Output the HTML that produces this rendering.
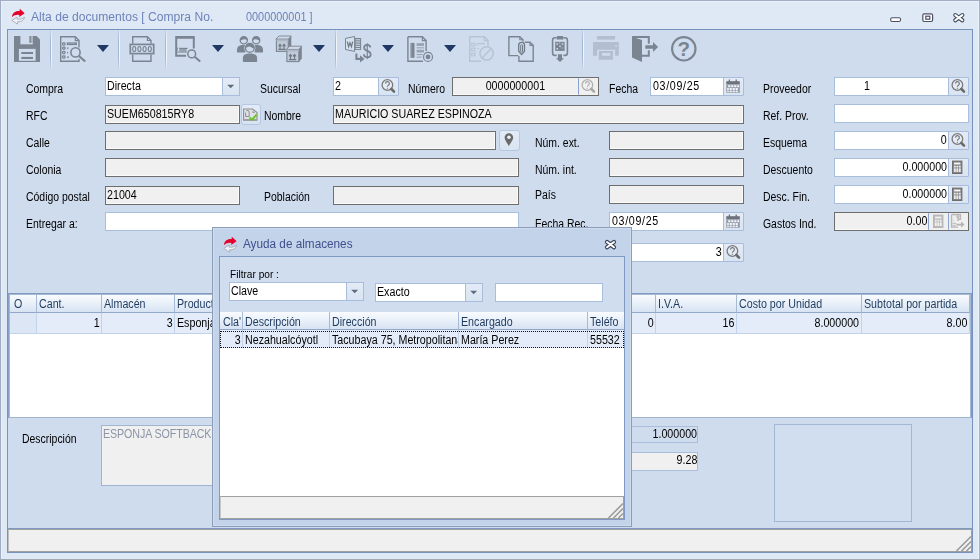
<!DOCTYPE html>
<html>
<head>
<meta charset="utf-8">
<title>Alta de documentos</title>
<style>
*{box-sizing:border-box;margin:0;padding:0}
html,body{width:980px;height:560px;overflow:hidden;background:#dfe9f5;font-family:"Liberation Sans",sans-serif;}
#win{position:absolute;left:0;top:0;width:980px;height:560px;background:#dfe9f5;border:1px solid #a0adc2;border-right:1px solid #a9b3c3;border-bottom:1px solid #a3a9b3;box-shadow:inset 1px 1px 0 #e9f0f9,inset -1px 0 0 #e9f0f9}
#content{position:absolute;left:7px;top:29px;width:966px;height:524px;background:#cfdcee;border:1px solid #7792bd;}
.ttl{position:absolute;font-size:12.5px;line-height:16px;white-space:nowrap;color:#6e82b9;}
.lbl{position:absolute;font-size:12px;line-height:14px;color:#000;white-space:nowrap;transform:scaleX(.87);transform-origin:left top;}
.in{position:absolute;height:19px;border:1px solid #a9bedb;background:#fff;font-size:12px;line-height:14px;padding:1px 2px 0 1px;white-space:nowrap;overflow:hidden;color:#000}
.in.d{border-color:#6e6e6e;background:#f0f0f0;box-shadow:inset -1px -1px 0 #fafafa}
.in.r{text-align:right;padding-right:1px}
.in.c{text-align:center}
.btn{position:absolute;height:20px;width:20px;border:1px solid #a9bddb;background:linear-gradient(#e3ebf7,#d9e4f2);border-radius:1px}
.sep{position:absolute;top:30px;width:2px;height:38px;background:linear-gradient(to right,#a3b7d5 0,#a3b7d5 1px,#f2f6fb 1px,#f2f6fb 2px);-webkit-mask-image:linear-gradient(to bottom,transparent 0,#000 25%,#000 75%,transparent 100%);mask-image:linear-gradient(to bottom,rgba(0,0,0,.3) 0,#000 30%,#000 70%,rgba(0,0,0,.3) 100%)}
.arr{position:absolute;width:0;height:0;border-left:6.6px solid transparent;border-right:6.6px solid transparent;border-top:7.4px solid #1f3864;top:44.7px}
.grid{position:absolute;background:#fff;border:1px solid #8599b9;overflow:hidden}
.gh{position:absolute;top:0;height:19px;border-right:1px solid #a6b9d5;border-bottom:1px solid #93a8c9;background:linear-gradient(#f9fbfe,#eaf1f9 45%,#d7e3f3);font-size:12px;line-height:14px;padding:3px 0 0 2px;color:#1e3a5f;white-space:nowrap;overflow:hidden}
.gc{position:absolute;height:21px;border-right:1px solid #c3d3ea;border-bottom:1px solid #c3d3ea;background:#e3ecf8;font-size:12px;line-height:14px;padding:3px 2px 0 2px;white-space:nowrap;overflow:hidden;color:#000}
.gc.r{text-align:right;padding-right:1.8px}
.mg .gh{height:18px;padding-top:2px}
.mg .gc{top:18px!important}
.in>span,.gh>span,.gc>span{display:inline-block;transform:scaleX(.89);transform-origin:left center;white-space:nowrap}
.r>span{transform-origin:right center}
.c>span{transform-origin:center center}
svg{position:absolute;overflow:visible}
.ico{position:absolute;width:26px;height:26px;top:36px}
</style>
</head>
<body>
<div id="win"></div>
<div id="content"></div>

<!-- TITLE BAR -->
<div class="ttl" style="left:31px;top:9px;transform:scaleX(.968);transform-origin:left top">Alta de documentos [ Compra No.</div>
<div class="ttl" style="left:246px;top:9px;transform:scaleX(.87);transform-origin:left top">0000000001 ]</div>
<svg style="left:11px;top:8px" width="15" height="18" viewBox="0 0 15 18"><path d="M0.9 9.2C1.2 4.8 5 2.6 8.6 3.2L8.8 0.8L13.6 5.2L8.2 9L8.4 6.9C5.6 6.5 3 7.2 0.9 9.2Z" fill="#e6002a"/><path d="M13.6 9.2C13 12.6 10 14.2 6.6 13.8L6.6 16.2L0.8 12.4L6 9.2L6.2 11.2C9 11.4 11.6 10.8 13.6 9.2Z" fill="#eef2f8" stroke="#a8adb5" stroke-width=".9"/></svg><svg style="left:890px;top:12px" width="76" height="11" viewBox="0 0 76 11"><rect x=".7" y="5.7" width="9.8" height="3.8" rx="1.4" fill="#fff" stroke="#4c5166" stroke-width="1.1"/><rect x="32.8" y="1.8" width="9.8" height="7.7" rx="1.4" fill="#fff" stroke="#4c5166" stroke-width="1.2"/><rect x="35.8" y="4.2" width="4" height="3" fill="#fff" stroke="#4c5166" stroke-width="1.2"/><path d="M65.3 3.1L72.3 8.3M72.3 3.1L65.3 8.3" stroke="#454a5e" stroke-width="4.2" stroke-linecap="round"/><path d="M65.3 3.1L72.3 8.3M72.3 3.1L65.3 8.3" stroke="#fff" stroke-width="2" stroke-linecap="round"/></svg><!--TITLEICONS-->

<!-- TOOLBAR -->
<!-- separators -->
<div class="sep" style="left:50px"></div>
<div class="sep" style="left:118px"></div>
<div class="sep" style="left:165px"></div>
<div class="sep" style="left:335px"></div>
<div class="sep" style="left:582px"></div>
<!-- dropdown arrows -->
<div class="arr" style="left:97px"></div>
<div class="arr" style="left:212px"></div>
<div class="arr" style="left:313px"></div>
<div class="arr" style="left:382px"></div>
<div class="arr" style="left:444px"></div>

<!-- 1 save -->
<svg class="ico" style="left:14px" viewBox="0 0 26 26"><path fill="#7b8591" d="M0 0H22.5L26 3.5V26H0Z"/><rect x="6.4" y="0" width="12.4" height="8.3" fill="#cfdcee"/><rect x="15.3" y="0" width="2.2" height="6.9" fill="#848d98"/><rect x="17.5" y="0" width="1.3" height="6.9" fill="#a9b2be"/><rect x="4.9" y="12.9" width="16.7" height="11.9" fill="#cfdcee"/><rect x="7.3" y="16" width="11.7" height="2" fill="#7b8591"/><rect x="7.3" y="20.9" width="11.7" height="2.1" fill="#7b8591"/></svg>

<!-- 2 doc search -->
<svg class="ico" style="left:60px" viewBox="0 0 26 26" fill="none" stroke="#7b8591"><path d="M19 11.5V4.6L15.3 0.7H0.7V25.3H19V23" stroke-width="1.4"/><path d="M15.3 0.7V4.6H19" stroke-width="1.2"/><g stroke-width="1.25"><rect x="2.6" y="6.9" width="2.4" height="2.2" rx=".8"/><rect x="2.6" y="11" width="2.4" height="2.2" rx=".8"/><rect x="2.6" y="15.4" width="2.4" height="2.2" rx=".8"/><rect x="2.6" y="19.9" width="2.4" height="2.2" rx=".8"/><rect x="7.4" y="7" width="9" height="1.5"/><path d="M7 12H8.6M7 16.5H8.2M7 21H9"/></g><circle cx="15.5" cy="16.4" r="4.6" stroke-width="1.6" fill="#cfdcee"/><path d="M18.9 20L25.3 25.5" stroke-width="2.2"/></svg>

<!-- 3 doc 0000 -->
<svg class="ico" style="left:129px" viewBox="0 0 26 26" fill="none" stroke="#7b8591"><path d="M3.7 7.5V0.7H18.4L22 4.5V7.5M3.7 18.5V25.3H22V18.5" stroke-width="1.4"/><path d="M18.4 0.7V4.5H22" stroke-width="1.2"/><rect x="1.3" y="8.4" width="23.4" height="9.2" stroke-width="1.7" fill="#cfdcee"/><g stroke-width="1.15"><ellipse cx="5.2" cy="13" rx="1.55" ry="2.5"/><ellipse cx="10.4" cy="13" rx="1.55" ry="2.5"/><ellipse cx="15.6" cy="13" rx="1.55" ry="2.5"/><ellipse cx="20.8" cy="13" rx="1.55" ry="2.5"/></g></svg>

<!-- 4 monitor search -->
<svg class="ico" style="left:175px" viewBox="0 0 26 26"><path fill="#7b8591" d="M0.2 0H19.8V12.5H17.8V2.7H2.2V18.8H11V20.8H0.2Z"/><rect x="2.2" y="11.8" width="10.3" height="1.2" fill="#7b8591"/><rect x="2.2" y="13" width="9.5" height="3.8" fill="#98a1ad"/><rect x="3" y="12" width="1.2" height="3.5" fill="#cfdcee"/><circle cx="16.7" cy="17.9" r="3.9" stroke="#7b8591" stroke-width="1.5" fill="#cfdcee"/><path d="M19.6 20.8L25.2 25.6" stroke="#7b8591" stroke-width="2" fill="none"/></svg>

<!-- 5 people -->
<svg class="ico" style="left:237px" viewBox="0 0 26 26"><path fill="#7b8591" d="M0 16.5V13.6C0 10.8 2.2 9.3 4.8 9.1H8.4V16.5ZM26 16.5V13.6C26 10.8 23.8 9.3 21.2 9.1H17.6V16.5Z"/><circle cx="6.8" cy="4.2" r="3.6" stroke="#7b8591" stroke-width="1.3" fill="#cfdcee"/><path fill="#7b8591" d="M3 4.4A3.8 3.8 0 0 1 10.6 4.4Q7.5 2.6 6 3.6T3 4.4Z"/><circle cx="19.2" cy="4.2" r="3.6" stroke="#7b8591" stroke-width="1.3" fill="#cfdcee"/><path fill="#7b8591" d="M15.4 4.4A3.8 3.8 0 0 1 23 4.4Q21.5 4.6 20 3.6T15.4 4.4Z"/><circle cx="12.8" cy="11.9" r="5.6" fill="#cfdcee"/><circle cx="12.8" cy="11.9" r="4.4" stroke="#7b8591" stroke-width="1.4" fill="#cfdcee"/><path fill="#7b8591" d="M8.2 12.2A4.6 4.6 0 0 1 17.4 12.2Q15.5 12.4 13.8 11T8.2 12.2Z"/><path fill="#7b8591" d="M5.9 26V22C5.9 18.6 9 17.5 13 17.5S20.1 18.6 20.1 22V26Z"/></svg>

<!-- 6 boxes -->
<svg class="ico" style="left:275px" viewBox="0 0 26 26"><g><path d="M0.9 3.3L3.9 0H16.3L13.3 3.3Z" fill="#cfd9e8" stroke="#7b8591" stroke-width=".9"/><path d="M13.3 3.3L16.3 0V12.6L13.3 15.9Z" fill="#7b8591"/><rect x="1.4" y="3.3" width="11.9" height="12.1" fill="#c0cad8" stroke="#7b8591" stroke-width="1.1"/><rect x="1.4" y="3.3" width="11.9" height="2" fill="#aeb8c6"/><path d="M5 13V8.6M9 13V8.6M3.6 10.2L5 8.2L6.4 10.2M7.6 10.2L9 8.2L10.4 10.2M3.4 13.4H10.6" stroke="#6f7985" stroke-width="1.1" fill="none"/></g><g transform="translate(10.5 10.2)"><path d="M0.9 3.3L3.9 0H16.3L13.3 3.3Z" fill="#cfd9e8" stroke="#7b8591" stroke-width=".9"/><path d="M13.3 3.3L16.3 0V12.6L13.3 15.9Z" fill="#7b8591"/><rect x="1.4" y="3.3" width="11.9" height="12.1" fill="#c0cad8" stroke="#7b8591" stroke-width="1.1"/><rect x="1.4" y="3.3" width="11.9" height="2" fill="#aeb8c6"/><path d="M5 13V8.6M9 13V8.6M3.6 10.2L5 8.2L6.4 10.2M7.6 10.2L9 8.2L10.4 10.2M3.4 13.4H10.6" stroke="#6f7985" stroke-width="1.1" fill="none"/></g></svg>

<!-- 7 word $ -->
<svg class="ico" style="left:345px" viewBox="0 0 26 26"><rect x="9.6" y="2" width="6.5" height="12" fill="#7b8591"/><g fill="#d3deee"><rect x="10.6" y="3.3" width="4.5" height="1"/><rect x="10.6" y="5.5" width="4.5" height="1"/><rect x="10.6" y="7.7" width="4.5" height="1"/><rect x="10.6" y="9.9" width="4.5" height="1"/><rect x="10.6" y="12.1" width="4.5" height="1"/></g><path d="M0.5 2.4L9.6 0.5V15.4L0.5 13.5Z" fill="#d6e1f0" stroke="#7b8591" stroke-width="1"/><path d="M2.3 5.6L3.6 10.6L5 6.8L6.4 10.6L7.7 5.6" stroke="#6f7985" stroke-width="1.25" fill="none"/><path d="M11.4 17.4V22.9H16" stroke="#7b8591" stroke-width="2.1" fill="none"/><path d="M15 19.3L19.6 22.9L15 26.4Z" fill="#7b8591"/><path d="M22.3 7.2V23" stroke="#7b8591" stroke-width="1.2" fill="none"/><path d="M25.3 11.6C25.3 9.7 24 8.9 22.3 8.9C20.4 8.9 19.1 9.9 19.1 11.7C19.1 15.5 25.7 14.2 25.7 18.2C25.7 20.2 24.1 21.3 22.3 21.3C20.3 21.3 18.9 20.2 18.9 18.3" stroke="#7b8591" stroke-width="1.7" fill="none"/></svg>

<!-- 8 doc lines -->
<svg class="ico" style="left:407px" viewBox="0 0 26 26"><path d="M0.9 0.7H15.4L19.1 4.6V15M16 25.3H0.9V0.7" stroke="#7b8591" stroke-width="1.4" fill="none"/><path d="M15.4 0.7V4.6H19.1" stroke="#7b8591" stroke-width="1.2" fill="none"/><rect x="3.6" y="6.9" width="3.9" height="14.9" fill="#7b8591"/><rect x="3.6" y="6.9" width="1" height="14.9" fill="#9aa3ae"/><g fill="#98a1ad"><rect x="9.6" y="7.2" width="7.4" height="2.7"/><rect x="9.6" y="11.3" width="7.4" height="1.1"/><rect x="9.6" y="13.8" width="7.4" height="2.7"/><rect x="9.6" y="18" width="6" height="1.1"/><rect x="9.6" y="20.6" width="5" height="1.1"/></g><circle cx="21" cy="20.9" r="4.5" stroke="#7b8591" stroke-width="1.2" fill="#cfdcee"/><circle cx="21" cy="20.9" r="2.4" fill="#7b8591"/></svg>

<!-- 9 disabled checklist -->
<svg class="ico" style="left:469px" viewBox="0 0 26 26" fill="none" stroke="#b7c4d7"><path d="M19 10V4.6L15.3 0.7H0.7V25.3H12" stroke-width="1.4"/><path d="M15.3 0.7V4.6H19" stroke-width="1.2"/><g stroke-width="1.1"><rect x="2.7" y="7.3" width="3.3" height="2.6"/><rect x="2.7" y="12.2" width="3.3" height="2.6"/><rect x="2.7" y="17.2" width="3.3" height="2.6"/><path d="M8.3 7.6H16M8.3 9.8V8M8.3 12.5H10"/></g><circle cx="17.6" cy="17.4" r="6.6" stroke-width="1.6" fill="#cfdcee"/><path d="M13 22L22.2 12.8" stroke-width="1.6"/></svg>

<!-- 10 docs clip -->
<svg class="ico" style="left:507px" viewBox="0 0 26 26" fill="none" stroke="#7b8591"><path d="M11.2 19.6H1.9V0.7H12.8L16 3.8V5.5" stroke-width="1.4"/><path d="M12.8 0.7V3.8H16" stroke-width="1.1"/><path d="M17.6 6.2H23L26.2 9.4V25.3H11.9V20" stroke-width="1.4"/><path d="M23 6.2V9.4H26.2" stroke-width="1.1"/><path d="M11.7 9.2A2.9 2.9 0 0 1 17.5 9.2V15.2L14.6 18.5L11.7 15.2Z" stroke="#6f7883" stroke-width="1.3"/><path d="M13.7 9.6A.9.9 0 0 1 15.5 9.6V15.2L14.6 16.2L13.7 15.2Z" stroke="#6f7883" stroke-width="1"/></svg>

<!-- 11 clipboard qr -->
<svg class="ico" style="left:549px" viewBox="0 0 26 26"><path d="M7.2 1.8H6A2.4 2.4 0 0 0 3.6 4.2V17A2.4 2.4 0 0 0 6 19.4H7.6M14.8 1.8H16A2.4 2.4 0 0 1 18.4 4.2V17A2.4 2.4 0 0 1 16 19.4H14.4" stroke="#7b8591" stroke-width="1.6" fill="none"/><path d="M7.5 3.5V1.2Q7.5 0 9 0H13Q14.5 0 14.5 1.2V3.5Z" fill="#7b8591"/><rect x="6.2" y="5.8" width="9.4" height="9.1" fill="#7b8591"/><path d="M7.5 7.2H9V8.7H7.5ZM12.8 7.2H14.3V8.7H12.8ZM7.5 12H9V13.5H7.5ZM10.3 9.6H11.8V11H10.3ZM12.6 11.6H13.6V12.6H12.6ZM10.4 6.6H11.2V7.8H10.4Z" fill="#cfdcee"/><path d="M8.9 18.3H13V22.3H15L11 26L7 22.3H8.9Z" fill="#7b8591"/></svg>

<!-- 12 printer (disabled) -->
<svg class="ico" style="left:593px" viewBox="0 0 26 26"><rect x="4.1" y="0" width="18" height="3.6" fill="#b3bfd1"/><path d="M0 5.9H25.8V19.7H22.1V13.7H4.1V19.7H0Z" fill="#b3bfd1"/><rect x="22.3" y="9.2" width="1.6" height="1.6" fill="#cfdcee"/><path d="M5.8 14.9H20V23.8H5.8ZM9 17.1V19.7H17.2V17.1Z" fill="#b3bfd1" fill-rule="evenodd"/></svg>

<!-- 13 exit door -->
<svg class="ico" style="left:632px" viewBox="0 0 26 26"><path d="M0 0H17.8V7.8H15.8V2H2ZM15.8 14.2H17.8V20.8H9V18.8H15.8Z" fill="#7b8591"/><path d="M0 0L3 1.8L10 4.1V26L0 21.5Z" fill="#7b8591"/><path d="M13.3 9.2H21V6L26.1 11L21 16V12.8H13.3Z" fill="#7b8591"/></svg>

<!-- 14 help -->
<svg class="ico" style="left:670px" viewBox="0 0 26 26"><circle cx="13.8" cy="12.8" r="11.7" stroke="#7b8591" stroke-width="2.2" fill="none"/><text x="13.8" y="20.2" font-size="20.5" font-weight="bold" text-anchor="middle" fill="#7b8591" font-family="Liberation Sans">?</text></svg>
<!--TOOLBAR-->

<!-- FORM -->
<div class="lbl" style="left:26px;top:82px">Compra</div>
<div class="lbl" style="left:26px;top:109px">RFC</div>
<div class="lbl" style="left:26px;top:136px">Calle</div>
<div class="lbl" style="left:26px;top:163px">Colonia</div>
<div class="lbl" style="left:26px;top:190px">Código postal</div>
<div class="lbl" style="left:26px;top:217px">Entregar a:</div>

<div class="in" style="left:105px;top:77px;width:135px"><span>Directa</span></div>
<div class="btn cb" style="left:222px;top:77px;width:18px;height:19px"><svg width="18" height="19" viewBox="0 0 18 19" style="left:-1px;top:-1px"><path d="M5.2 7.8H12.2L8.7 11.3Z" fill="#5f6b80"/></svg></div>
<div class="in d" style="left:105px;top:105px;width:135px"><span>SUEM650815RY8</span></div>
<div class="btn" style="left:241px;top:104px;height:21px;border-radius:3px;border-color:#b5c7e2"><svg width="20" height="20" viewBox="0 0 20 20" style="left:-1px;top:-1px"><path d="M2.6 5H11.6L16 8.6V16.2H2.6Z" fill="#dfe3e8" stroke="#8e8e8e" stroke-width="1.1"/><path d="M2.6 15H16V16.6H2.6Z" fill="#a0a0a0"/><path d="M5.2 7.2C6.2 5.6 8.2 6.4 8.2 8V12.5H4.6V8.6" stroke="#8e8e8e" stroke-width="1" fill="none"/><path d="M11.4 6.5L14.2 9H11.4Z" fill="#9a9a9a"/><path d="M8.6 13.4L10.8 15.8L15.8 10.6" stroke="#6cc62f" stroke-width="2.1" fill="none"/></svg></div>
<div class="in d" style="left:105px;top:131px;width:391px"></div>
<div class="btn" style="left:499px;top:130px;height:21px;width:21px;border-radius:3px;border-color:#b5c7e2"><svg width="20" height="20" viewBox="0 0 20 20" style="left:-1px;top:-1px"><path d="M9.9 3.2A4.3 4.3 0 0 0 5.6 7.5C5.6 10.2 9 14 9.9 16.2C10.8 14 14.2 10.2 14.2 7.5A4.3 4.3 0 0 0 9.9 3.2Z" fill="#6a6a6a"/><circle cx="9.9" cy="7.2" r="1.8" fill="#eef2f8"/></svg></div>
<div class="in d" style="left:105px;top:158px;width:414px"></div>
<div class="in d" style="left:105px;top:186px;width:135px"><span>21004</span></div>
<div class="in" style="left:105px;top:212px;width:414px"></div>

<div class="lbl" style="left:260px;top:82px">Sucursal</div>
<div class="lbl" style="left:264px;top:109px">Nombre</div>
<div class="lbl" style="left:264px;top:190px">Población</div>
<div class="in" style="left:333px;top:77px;width:46px"><span>2</span></div>
<div class="btn" style="left:378px;top:77px;height:19px;width:21px"><svg width="20" height="19" viewBox="0 0 20 19" style="left:-1px;top:-1px"><circle cx="9.4" cy="8" r="5.3" stroke="#7a7a7a" stroke-width="1.3" fill="#e4ebf5"/><path d="M7.6 6.6A1.9 1.9 0 1 1 10.3 8.2C9.6 8.7 9.4 9 9.4 9.8M9.4 10.7V11.7" stroke="#7a7a7a" stroke-width="1.2" fill="none"/><path d="M13.4 12L16 14.6" stroke="#6a6a6a" stroke-width="2.6" stroke-linecap="round"/></svg></div>
<div class="in d" style="left:333px;top:105px;width:411px"><span>MAURICIO SUAREZ ESPINOZA</span></div>
<div class="in d" style="left:333px;top:186px;width:186px"></div>

<div class="lbl" style="left:408px;top:82px">Número</div>
<div class="in d" style="left:452px;top:77px;width:147px"></div><div class="in c" style="left:453px;top:78px;width:125px;height:17px;border:0;background:none;padding-top:1px"><span>0000000001</span></div>
<div class="btn" style="left:578px;top:78px;height:17px;width:20px;border:0;border-left:1px solid #8aa3cc;background:#f0f0f0"><!--nb--><svg width="20" height="19" viewBox="0 0 20 19" style="left:-1px;top:-1px"><circle cx="9.4" cy="8" r="5.3" stroke="#b0b0b0" stroke-width="1.3" fill="#f0f0f0"/><path d="M7.6 6.6A1.9 1.9 0 1 1 10.3 8.2C9.6 8.7 9.4 9 9.4 9.8M9.4 10.7V11.7" stroke="#b0b0b0" stroke-width="1.2" fill="none"/><path d="M13.4 12L16 14.6" stroke="#a8a8a8" stroke-width="2.6" stroke-linecap="round"/></svg></div>
<div class="lbl" style="left:609px;top:82px">Fecha</div>
<div class="in" style="left:650px;top:77px;width:74px;padding-left:1px;letter-spacing:.75px;padding-left:1.5px"><span>03/09/25</span></div>
<div class="btn" style="left:723px;top:77px;height:19px;width:21px"><svg width="20" height="19" viewBox="0 0 20 19" style="left:-1px;top:-1px"><path d="M6.4 2.4V5.5M13.2 2.4V5.5" stroke="#6e6e6e" stroke-width="1.3"/><rect x="3.3" y="4.2" width="13.5" height="3.2" fill="#6d727c"/><rect x="3.3" y="7.4" width="13.5" height="8.4" fill="#959ba6"/><g fill="#f2f5fa"><rect x="5.2" y="8.2" width="2.2" height="2"/><rect x="8.2" y="8.2" width="2.2" height="2"/><rect x="11.2" y="8.2" width="2.2" height="2"/><rect x="14.2" y="8.2" width="1.8" height="2"/><rect x="4.2" y="11" width="1.6" height="2"/><rect x="6.6" y="11" width="2.2" height="2"/><rect x="9.6" y="11" width="2.2" height="2"/><rect x="12.6" y="11" width="2.2" height="2"/><rect x="4.2" y="13.6" width="1.6" height="1.6"/><rect x="6.6" y="13.6" width="2.2" height="1.6"/><rect x="9.6" y="13.6" width="2.2" height="1.6"/><rect x="12.6" y="13.6" width="2.2" height="1.6"/></g></svg></div>

<div class="lbl" style="left:535px;top:136px">Núm. ext.</div>
<div class="lbl" style="left:535px;top:163px">Núm. int.</div>
<div class="lbl" style="left:535px;top:188px">País</div>
<div class="lbl" style="left:535px;top:217px">Fecha Rec.</div>
<div class="in d" style="left:609px;top:131px;width:135px"></div>
<div class="in d" style="left:609px;top:158px;width:135px"></div>
<div class="in d" style="left:609px;top:185px;width:135px"></div>
<div class="in" style="left:609px;top:212px;width:115px;padding-left:1px;letter-spacing:.75px;padding-left:1.5px"><span>03/09/25</span></div>
<div class="btn" style="left:723px;top:212px;height:19px;width:21px"><svg width="20" height="19" viewBox="0 0 20 19" style="left:-1px;top:-1px"><path d="M6.4 2.4V5.5M13.2 2.4V5.5" stroke="#6e6e6e" stroke-width="1.3"/><rect x="3.3" y="4.2" width="13.5" height="3.2" fill="#6d727c"/><rect x="3.3" y="7.4" width="13.5" height="8.4" fill="#959ba6"/><g fill="#f2f5fa"><rect x="5.2" y="8.2" width="2.2" height="2"/><rect x="8.2" y="8.2" width="2.2" height="2"/><rect x="11.2" y="8.2" width="2.2" height="2"/><rect x="14.2" y="8.2" width="1.8" height="2"/><rect x="4.2" y="11" width="1.6" height="2"/><rect x="6.6" y="11" width="2.2" height="2"/><rect x="9.6" y="11" width="2.2" height="2"/><rect x="12.6" y="11" width="2.2" height="2"/><rect x="4.2" y="13.6" width="1.6" height="1.6"/><rect x="6.6" y="13.6" width="2.2" height="1.6"/><rect x="9.6" y="13.6" width="2.2" height="1.6"/><rect x="12.6" y="13.6" width="2.2" height="1.6"/></g></svg></div>
<div class="in r" style="left:609px;top:243px;width:115px"><span>3</span></div>
<div class="btn" style="left:723px;top:243px;height:19px;width:21px"><svg width="20" height="19" viewBox="0 0 20 19" style="left:-1px;top:-1px"><circle cx="9.4" cy="8" r="5.3" stroke="#7a7a7a" stroke-width="1.3" fill="#e4ebf5"/><path d="M7.6 6.6A1.9 1.9 0 1 1 10.3 8.2C9.6 8.7 9.4 9 9.4 9.8M9.4 10.7V11.7" stroke="#7a7a7a" stroke-width="1.2" fill="none"/><path d="M13.4 12L16 14.6" stroke="#6a6a6a" stroke-width="2.6" stroke-linecap="round"/></svg></div>

<div class="lbl" style="left:763px;top:82px">Proveedor</div>
<div class="lbl" style="left:763px;top:109px">Ref. Prov.</div>
<div class="lbl" style="left:763px;top:136px">Esquema</div>
<div class="lbl" style="left:763px;top:163px">Descuento</div>
<div class="lbl" style="left:763px;top:190px">Desc. Fin.</div>
<div class="lbl" style="left:763px;top:217px">Gastos Ind.</div>
<div class="in" style="left:834px;top:77px;width:115px;padding-left:29px"><span>1</span></div>
<div class="btn" style="left:948px;top:77px;height:19px;width:21px"><svg width="20" height="19" viewBox="0 0 20 19" style="left:-1px;top:-1px"><circle cx="9.4" cy="8" r="5.3" stroke="#7a7a7a" stroke-width="1.3" fill="#e4ebf5"/><path d="M7.6 6.6A1.9 1.9 0 1 1 10.3 8.2C9.6 8.7 9.4 9 9.4 9.8M9.4 10.7V11.7" stroke="#7a7a7a" stroke-width="1.2" fill="none"/><path d="M13.4 12L16 14.6" stroke="#6a6a6a" stroke-width="2.6" stroke-linecap="round"/></svg></div>
<div class="in" style="left:834px;top:104px;width:135px"></div>
<div class="in r" style="left:834px;top:131px;width:115px"><span>0</span></div>
<div class="btn" style="left:948px;top:131px;height:19px;width:21px"><svg width="20" height="19" viewBox="0 0 20 19" style="left:-1px;top:-1px"><circle cx="9.4" cy="8" r="5.3" stroke="#7a7a7a" stroke-width="1.3" fill="#e4ebf5"/><path d="M7.6 6.6A1.9 1.9 0 1 1 10.3 8.2C9.6 8.7 9.4 9 9.4 9.8M9.4 10.7V11.7" stroke="#7a7a7a" stroke-width="1.2" fill="none"/><path d="M13.4 12L16 14.6" stroke="#6a6a6a" stroke-width="2.6" stroke-linecap="round"/></svg></div>
<div class="in r" style="left:834px;top:158px;width:115px"><span>0.000000</span></div>
<div class="btn" style="left:948px;top:158px;height:19px;width:21px"><svg width="20" height="19" viewBox="0 0 20 19" style="left:-1px;top:-1px"><rect x="4.6" y="3.2" width="9.2" height="12.2" fill="#8c8c8c" stroke="#6e6e6e" stroke-width="1.2"/><rect x="6.1" y="4.6" width="6.2" height="1.8" fill="#f4f6fa"/><g fill="#e8ecf2"><rect x="5.9" y="7.8" width="1.8" height="1.7"/><rect x="8.4" y="7.8" width="1.8" height="1.7"/><rect x="10.9" y="7.8" width="1.8" height="1.7"/><rect x="5.9" y="10.4" width="1.8" height="3.6"/><rect x="8.4" y="10.4" width="1.8" height="3.6"/><rect x="10.9" y="10.4" width="1.8" height="3.6"/></g></svg></div>
<div class="in r" style="left:834px;top:185px;width:115px"><span>0.000000</span></div>
<div class="btn" style="left:948px;top:185px;height:19px;width:21px"><svg width="20" height="19" viewBox="0 0 20 19" style="left:-1px;top:-1px"><rect x="4.6" y="3.2" width="9.2" height="12.2" fill="#8c8c8c" stroke="#6e6e6e" stroke-width="1.2"/><rect x="6.1" y="4.6" width="6.2" height="1.8" fill="#f4f6fa"/><g fill="#e8ecf2"><rect x="5.9" y="7.8" width="1.8" height="1.7"/><rect x="8.4" y="7.8" width="1.8" height="1.7"/><rect x="10.9" y="7.8" width="1.8" height="1.7"/><rect x="5.9" y="10.4" width="1.8" height="3.6"/><rect x="8.4" y="10.4" width="1.8" height="3.6"/><rect x="10.9" y="10.4" width="1.8" height="3.6"/></g></svg></div>
<div class="in d" style="left:834px;top:212px;width:135px"></div><div class="in r" style="left:835px;top:213px;width:93px;height:17px;border:0;background:none;padding-top:1px"><span>0.00</span></div>
<div class="btn" style="left:928px;top:213px;height:17px;width:20px;border:0;border-left:1px solid #8aa3cc;background:#f0f0f0"><!--nb--><svg width="20" height="19" viewBox="0 0 20 19" style="left:0px;top:-1px"><rect x="4.6" y="3.2" width="9.2" height="12.2" fill="#bdbdbd" stroke="#b5b5b5" stroke-width="1.2"/><rect x="6.1" y="4.6" width="6.2" height="1.8" fill="#f0f0f0"/><g fill="#f0f0f0"><rect x="5.9" y="7.8" width="1.8" height="1.7"/><rect x="8.4" y="7.8" width="1.8" height="1.7"/><rect x="10.9" y="7.8" width="1.8" height="1.7"/><rect x="5.9" y="10.4" width="1.8" height="3.6"/><rect x="8.4" y="10.4" width="1.8" height="3.6"/><rect x="10.9" y="10.4" width="1.8" height="3.6"/></g></svg></div>
<div class="btn" style="left:948px;top:213px;height:17px;width:20px;border:0;border-left:1px solid #8aa3cc;background:#f0f0f0"><!--nb--><svg width="20" height="19" viewBox="0 0 20 19" style="left:-1px;top:-1px"><path d="M3.5 2.5H12.5V8M3.5 2.5V15.2H10" stroke="#b8b8b8" stroke-width="1.3" fill="#e6e6e6"/><path d="M11.4 4.4C10.2 3.6 8.8 4 8.8 5C8.8 6.4 11.6 5.8 11.6 7.2C11.6 8.4 9.8 8.6 8.7 7.8M10.2 3.2V9" stroke="#b0b0b0" stroke-width=".9" fill="none"/><path d="M4.5 11.5H8.5M4.5 13.5H7.5" stroke="#c0c0c0" stroke-width="1"/><path d="M8.5 11.8H13V9.6L16.6 12.6L13 15.6V13.4H8.5Z" fill="#b5b5b5"/></svg></div>
<!--FORM-->

<!-- GRID -->
<div style="position:absolute;left:8px;top:293px;width:964px;height:125px;border:1px solid #7f9abf;border-left-color:#86a0c6;border-bottom-color:#a0b3d0"></div>
<div class="grid mg" style="left:9px;top:294px;width:962px;height:123px;border-color:#a6b8d4;border-bottom:0">
  <div class="gh" style="left:0;width:27px;padding-left:4px"><span>O</span></div>
  <div class="gh" style="left:27px;width:65px"><span>Cant.</span></div>
  <div class="gh" style="left:92px;width:73px"><span>Almacén</span></div>
  <div class="gh" style="left:165px;width:120px"><span>Producto</span></div>
  <div class="gh" style="left:285px;width:361px"></div>
  <div class="gh" style="left:646px;width:81px"><span>I.V.A.</span></div>
  <div class="gh" style="left:727px;width:125px"><span>Costo por Unidad</span></div>
  <div class="gh" style="left:852px;width:108px"><span>Subtotal por partida</span></div>
  <div class="gc" style="left:0;top:19px;width:27px;background:#dce6f4"></div>
  <div class="gc r" style="left:27px;top:19px;width:65px"><span>1</span></div>
  <div class="gc r" style="left:92px;top:19px;width:73px"><span>3</span></div>
  <div class="gc" style="left:165px;top:19px;width:120px"><span>Esponja</span></div>
  <div class="gc r" style="left:285px;top:19px;width:361px"><span>0</span></div>
  <div class="gc r" style="left:646px;top:19px;width:81px"><span>16</span></div>
  <div class="gc r" style="left:727px;top:19px;width:125px"><span>8.000000</span></div>
  <div class="gc r" style="left:852px;top:19px;width:108px"><span>8.00</span></div>
</div>
<!--GRID-->

<!-- BOTTOM -->
<div class="lbl" style="left:22px;top:432px">Descripción</div>
<div class="in" style="left:101px;top:425px;width:300px;height:61px;background:#f0f0f0;border-color:#a0b3d1;color:#8b95a5;letter-spacing:-.1px;padding-left:1px"><span>ESPONJA SOFTBACK</span></div>
<div class="in r" style="left:600px;top:426px;width:98px;height:17px;background:#cfdcee;border-color:#a9bedb;padding:0 0 0 0"><span>1.000000</span></div>
<div class="in r" style="left:600px;top:452px;width:98px;height:19px;background:#f0f0f0;border-color:#a9bedb;padding:0 0 0 0"><span>9.28</span></div>
<div style="position:absolute;left:774px;top:424px;width:138px;height:98px;border:1px solid #a3b6d3;background:#d1deef"></div>
<div style="position:absolute;left:8px;top:528px;width:964px;height:24px;border-top:1px solid #7f9ac2"><div style="width:964px;height:23px;background:#f0f0f0;border:1px solid #a0a0a0;border-left-color:#c0c0c0"></div></div>
<svg style="left:956px;top:536px" width="15" height="15" viewBox="0 0 15 15"><path d="M15 .5L.5 15M15 5.5L5.5 15M15 10.5L10.5 15" stroke="#9c9c9c" stroke-width="1.6" fill="none"/></svg>
<!--BOTTOM-->

<!-- DIALOG -->
<div style="position:absolute;left:212px;top:227px;width:420px;height:300px;background:#c2d3ea;border:1px solid #8c9db8;box-shadow:inset 0 0 0 1px #cfdcef"></div>
<div style="position:absolute;left:219px;top:256px;width:406px;height:264px;background:#d0ddee;border:1px solid #7f9ac2"></div>
<div class="ttl" style="left:243px;top:236px;color:#3f508d;font-size:12.5px;transform:scaleX(.94);transform-origin:left top">Ayuda de almacenes</div>
<svg style="left:604px;top:239px" width="13" height="11" viewBox="0 0 13 11"><path d="M3 3L10 8.2M10 3L3 8.2" stroke="#3f4356" stroke-width="4.2" stroke-linecap="round"/><path d="M3 3L10 8.2M10 3L3 8.2" stroke="#fff" stroke-width="2" stroke-linecap="round"/></svg>
<div class="lbl" style="left:230px;top:267px;font-size:11px;transform:scaleX(.92)">Filtrar por :</div>
<div class="in" style="left:229px;top:282px;width:135px;height:19px;padding-top:1px;padding-left:1px"><span>Clave</span></div>
<div class="btn cb" style="left:346px;top:282px;width:18px;height:19px"><svg width="18" height="19" viewBox="0 0 18 19" style="left:-1px;top:-1px"><path d="M5.2 7.8H12.2L8.7 11.3Z" fill="#5f6b80"/></svg></div>
<div class="in" style="left:375px;top:283px;width:108px;height:19px;padding-top:1px;padding-left:1px"><span>Exacto</span></div>
<div class="btn cb" style="left:465px;top:283px;width:18px;height:19px"><svg width="18" height="19" viewBox="0 0 18 19" style="left:-1px;top:-1px"><path d="M5.2 7.8H12.2L8.7 11.3Z" fill="#5f6b80"/></svg></div>
<div class="in" style="left:495px;top:283px;width:108px;height:19px"></div>
<div class="grid" style="left:220px;top:312px;width:404px;height:185px;border:0">
  <div class="gh" style="left:0;width:23px;height:18px;padding-left:3px"><span>Cla'</span></div>
  <div class="gh" style="left:23px;width:87px;height:18px"><span>Descripción</span></div>
  <div class="gh" style="left:110px;width:129px;height:18px"><span>Dirección</span></div>
  <div class="gh" style="left:239px;width:129px;height:18px"><span>Encargado</span></div>
  <div class="gh" style="left:368px;width:36px;height:18px;border-right:0"><span>Teléfo</span></div>
  <div class="gc r" style="left:0;top:18px;width:23px;height:18px;padding-right:1px;border-bottom:0"><span>3</span></div>
  <div class="gc" style="left:23px;top:18px;width:87px;height:18px;border-bottom:0"><span>Nezahualcóyotl</span></div>
  <div class="gc" style="left:110px;top:18px;width:129px;height:18px;border-bottom:0"><span>Tacubaya 75, Metropolitana</span></div>
  <div class="gc" style="left:239px;top:18px;width:129px;height:18px;border-bottom:0"><span>María Perez</span></div>
  <div class="gc" style="left:368px;top:18px;width:36px;height:18px;border-bottom:0;border-right:0"><span>55532</span></div>
  <div style="position:absolute;left:0;top:19px;width:404px;height:17px;border:1px dotted #111"></div>
</div>
<div style="position:absolute;left:220px;top:496px;width:404px;height:23px;background:#f0f0f0;border:1px solid #a0a0a0;border-left-color:#c8c8c8"></div>
<svg style="left:608px;top:503px" width="15" height="15" viewBox="0 0 15 15"><path d="M15 .5L.5 15M15 5.5L5.5 15M15 10.5L10.5 15" stroke="#9c9c9c" stroke-width="1.6" fill="none"/></svg>
<svg style="left:223px;top:235.5px" width="15" height="18" viewBox="0 0 15 18"><path d="M0.9 9.2C1.2 4.8 5 2.6 8.6 3.2L8.8 0.8L13.6 5.2L8.2 9L8.4 6.9C5.6 6.5 3 7.2 0.9 9.2Z" fill="#e6002a"/><path d="M13.6 9.2C13 12.6 10 14.2 6.6 13.8L6.6 16.2L0.8 12.4L6 9.2L6.2 11.2C9 11.4 11.6 10.8 13.6 9.2Z" fill="#eef2f8" stroke="#a8adb5" stroke-width=".9"/></svg><!--DIALOG-->

</body>
</html>
